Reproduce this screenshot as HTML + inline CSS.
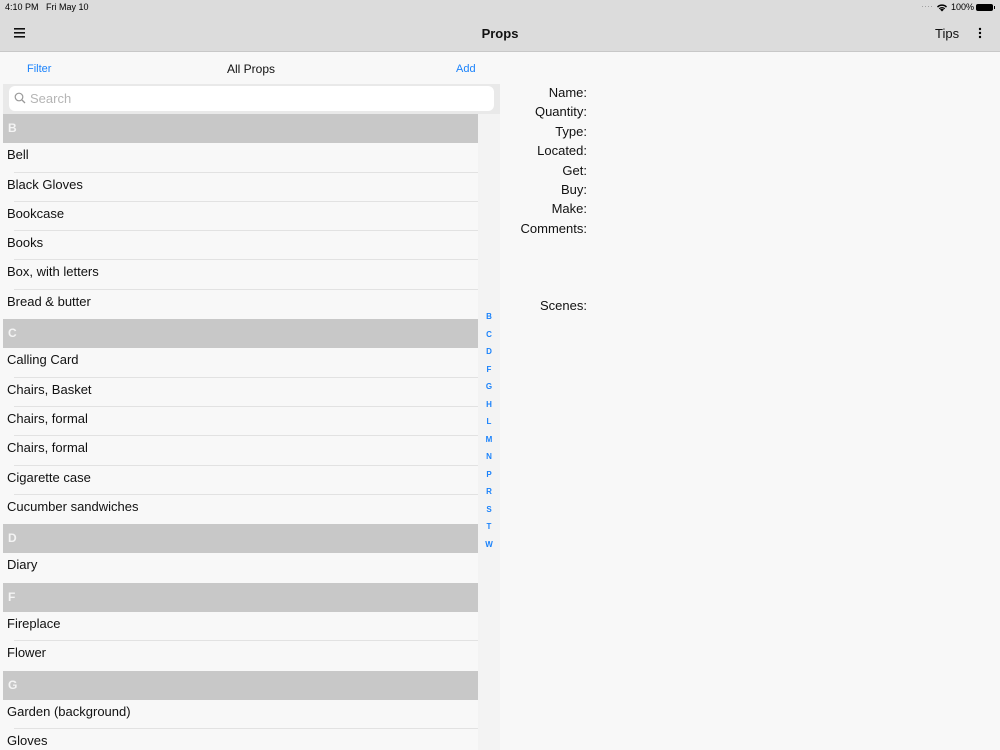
<!DOCTYPE html>
<html><head><style>
html,body{margin:0;width:1000px;height:750px;overflow:hidden}
body{background:#f8f8f8;font-family:"Liberation Sans",sans-serif;position:relative}
.top{position:absolute;left:0;top:0;width:1000px;height:51px;background:#dcdcdc;border-bottom:1px solid #c8c8c8}
.abs{position:absolute}
.list{position:absolute;left:3px;top:114px;width:475px}
.h{height:29.3px;background:#c8c8c8;color:#f4f4f4;font-size:12px;font-weight:bold;line-height:28px;padding-left:5px;box-sizing:border-box}
.r{height:29.3px;line-height:24px;font-size:13px;color:#111;padding-left:4px;box-sizing:border-box;position:relative}
.r.s::after{content:"";position:absolute;left:11px;right:0;bottom:0;height:1px;background:#e2e2e2}
.idx{position:absolute;left:482px;width:14px;text-align:center;top:308px;font-size:8px;font-weight:bold;color:#1a82fb;line-height:17.5px}
.lab{position:absolute;right:413px;font-size:13px;color:#111}
</style></head><body>
<div class="top"></div>
<div class="abs" style="left:5px;top:2px;font-size:9px;color:#000">4:10 PM&nbsp;&nbsp;&nbsp;Fri May 10</div>
<div class="abs" style="left:921px;top:1px;font-size:9px;color:#999">····</div>
<svg class="abs" style="left:936px;top:3px" width="12" height="9" viewBox="0 0 12 9"><path d="M6 8.5L8 6.5A3 3 0 0 0 4 6.5Z M1 3.5A7 7 0 0 1 11 3.5L10 4.6A5.5 5.5 0 0 0 2 4.6Z M2.8 5.3A4.7 4.7 0 0 1 9.2 5.3L8.3 6.2A3.4 3.4 0 0 0 3.7 6.2Z" fill="#000"/></svg>
<div class="abs" style="left:951px;top:2px;font-size:9px">100%</div>
<div class="abs" style="left:976px;top:4px;width:17px;height:7px;background:#000;border-radius:2px"></div>
<div class="abs" style="left:994px;top:6px;width:1px;height:3px;background:#000"></div>
<svg class="abs" style="left:14px;top:28px" width="12" height="10"><rect y="0" width="11" height="1.6" fill="#111"/><rect y="4" width="11" height="1.6" fill="#111"/><rect y="8" width="11" height="1.6" fill="#111"/></svg>
<div class="abs" style="left:0;width:1000px;top:26px;text-align:center;font-size:13px;font-weight:bold;color:#111">Props</div>
<div class="abs" style="left:935px;top:26px;font-size:13px;color:#111">Tips</div>
<svg class="abs" style="left:978px;top:27px" width="4" height="12"><circle cx="2" cy="2" r="1.2"/><circle cx="2" cy="6" r="1.2"/><circle cx="2" cy="10" r="1.2"/></svg>
<div class="abs" style="left:27px;top:63px;font-size:11px;color:#1a82fb">Filter</div>
<div class="abs" style="left:227px;top:62px;font-size:12px;color:#111">All Props</div>
<div class="abs" style="left:456px;top:63px;font-size:11px;color:#1a82fb">Add</div>
<div class="abs" style="left:3px;top:84px;width:497px;height:30px;background:#e9e9e9"></div>
<div class="abs" style="left:9px;top:86px;width:485px;height:25px;background:#fff;border-radius:6px"></div>
<svg class="abs" style="left:14px;top:92px" width="12" height="12"><circle cx="5" cy="5" r="3.8" fill="none" stroke="#999" stroke-width="1.2"/><path d="M8 8L11 11" stroke="#999" stroke-width="1.3"/></svg>
<div class="abs" style="left:30px;top:91px;font-size:13px;color:#b5b5b5">Search</div>
<div class="abs" style="left:478px;top:114px;width:22px;height:636px;background:#f3f3f3"></div>
<div class="list">
<div class="h">B</div>
<div class="r s">Bell</div><div class="r s">Black Gloves</div><div class="r s">Bookcase</div><div class="r s">Books</div><div class="r s">Box, with letters</div><div class="r">Bread &amp; butter</div>
<div class="h">C</div>
<div class="r s">Calling Card</div><div class="r s">Chairs, Basket</div><div class="r s">Chairs, formal</div><div class="r s">Chairs, formal</div><div class="r s">Cigarette case</div><div class="r">Cucumber sandwiches</div>
<div class="h">D</div>
<div class="r">Diary</div>
<div class="h">F</div>
<div class="r s">Fireplace</div><div class="r">Flower</div>
<div class="h">G</div>
<div class="r s">Garden (background)</div><div class="r">Gloves</div>
</div>
<div class="idx">B<br>C<br>D<br>F<br>G<br>H<br>L<br>M<br>N<br>P<br>R<br>S<br>T<br>W</div>
<div class="lab" style="top:85px">Name:</div>
<div class="lab" style="top:104px">Quantity:</div>
<div class="lab" style="top:124px">Type:</div>
<div class="lab" style="top:143px">Located:</div>
<div class="lab" style="top:163px">Get:</div>
<div class="lab" style="top:182px">Buy:</div>
<div class="lab" style="top:201px">Make:</div>
<div class="lab" style="top:221px">Comments:</div>
<div class="lab" style="top:298px">Scenes:</div>
</body></html>
